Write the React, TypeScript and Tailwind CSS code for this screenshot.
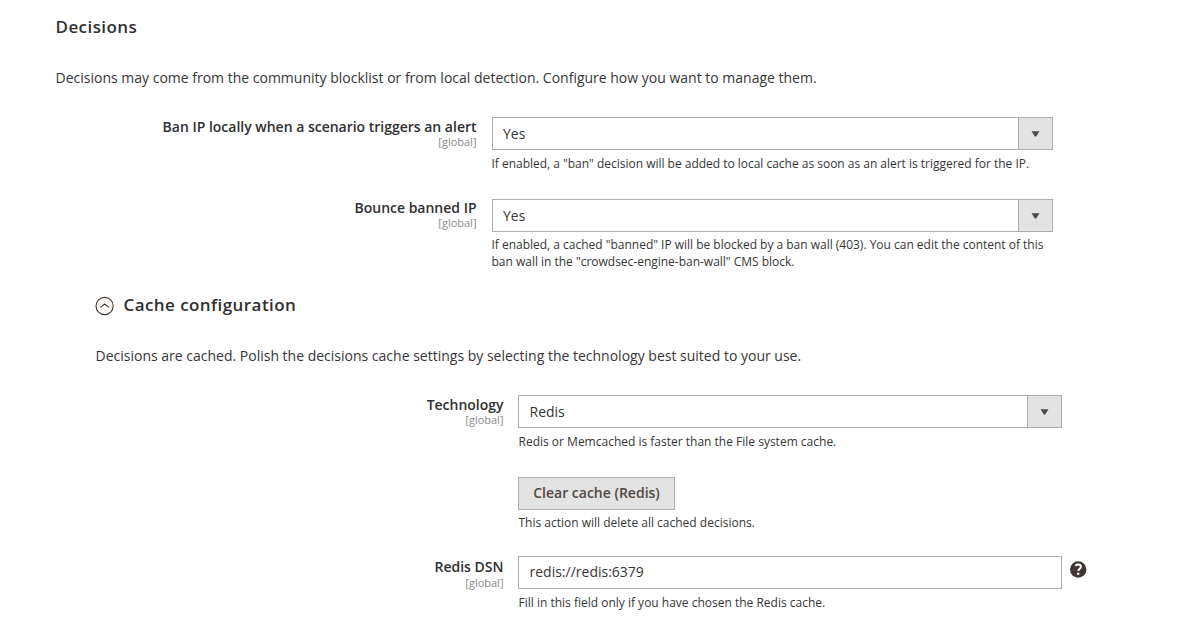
import React from "react";

function Label({ text, className = "" }: { text: string; className?: string }) {
  return (
    <div className={`pr-[0.5px] text-right ${className}`}>
      <div className="text-[14px] font-semibold leading-[18px] tracking-[-0.01px] text-[#303030]">{text}</div>
      <div className="text-[11px] leading-[12px] text-[#8c8c8c]">[global]</div>
    </div>
  );
}

function Select({ value, className = "pl-[10px]" }: { value: string; className?: string }) {
  return (
    <div className="flex h-[33px] border border-[#adadad] bg-white text-[14px] text-[#363636]">
      <div className={`flex flex-1 items-center ${className}`}>{value}</div>
      <div className="flex w-[34px] items-center justify-center border-l border-[#adadad] bg-[#e3e3e3]">
        <svg className="mt-px" width="9" height="6" viewBox="0 0 9 6"><path d="M0.5 0.3h8L5.2 5.5H3.8z" fill="#514943" /></svg>
      </div>
    </div>
  );
}

function HelpIcon() {
  return (
    <svg className="-ml-[6px] mt-[5px]" width="17" height="17" viewBox="0 0 17 17" fill="none">
      <circle cx="8.2" cy="8.5" r="8.2" fill="#41362f" />
      <path d="M5.4 4.7C6.2 3.9 7.2 3.6 8.2 3.6c1.7 0 2.7.8 2.7 2.1 0 2-2.6 2-2.6 4.4" stroke="#fff" strokeWidth="2" />
      <circle cx="8.2" cy="12.8" r="1.3" fill="#fff" />
    </svg>
  );
}

export default function App() {
  return (
    <main className="h-[634px] w-[1200px] overflow-hidden bg-white font-['Open_Sans',sans-serif] text-[#363636]">
      <h2 className="ml-[55.5px] pt-[14px] text-[17px] font-semibold leading-[26px] tracking-[0.425px] text-[#303030]">Decisions</h2>
      <p className="ml-[55.5px] mt-[28px] text-[14px] leading-[20px]">Decisions may come from the community blocklist or from local detection. Configure how you want to manage them.</p>
      <div className="mt-[29px] grid h-[82px] grid-cols-[477px_561px] gap-x-[15px]">
        <Label className="pt-px" text="Ban IP locally when a scenario triggers an alert" />
        <div>
          <Select value="Yes" />
          <p className="-ml-[0.5px] mt-[5px] text-[12px] leading-[17px] tracking-[-0.015px]">If enabled, a "ban" decision will be added to local cache as soon as an alert is triggered for the IP.</p>
        </div>
      </div>
      <div className="grid h-[93px] grid-cols-[477px_561px] gap-x-[15px]">
        <Label text="Bounce banned IP" />
        <div>
          <Select value="Yes" />
          <p className="-ml-[0.5px] mt-[4px] text-[12px] leading-[17px] tracking-[-0.012px]">If enabled, a cached "banned" IP will be blocked by a ban wall (403). You can edit the content of this ban wall in the "crowdsec-engine-ban-wall" CMS block.</p>
        </div>
      </div>
      <div className="ml-[94.5px] flex h-[26px] items-center">
        <svg className="mt-[2px]" width="20" height="20" viewBox="0 0 20 20" fill="none" stroke="#41362f" strokeWidth="1.1"><circle cx="9.6" cy="10" r="8.6" /><path d="M5.3 11.4L9.6 8l4.3 3.4" strokeWidth="1.2" /></svg>
        <h2 className="ml-[9px] text-[17px] font-semibold tracking-[0.425px] text-[#303030]">Cache configuration</h2>
      </div>
      <p className="ml-[95.5px] mt-[28px] text-[14px] leading-[20px]">Decisions are cached. Polish the decisions cache settings by selecting the technology best suited to your use.</p>
      <div className="mt-[29px] grid h-[82px] grid-cols-[504px_544px] gap-x-[14px]">
        <Label className="pt-px" text="Technology" />
        <div>
          <Select value="Redis" className="pl-[10.5px]" />
          <p className="ml-[0.5px] mt-[5px] text-[12px] leading-[17px]">Redis or Memcached is faster than the File system cache.</p>
        </div>
      </div>
      <div className="ml-[518px] h-[79px]">
        <button className="block h-[33px] w-[157px] border border-[#adadad] bg-[#e3e3e3] pb-[2px] text-[14px] font-semibold text-[#514943]">Clear cache (Redis)</button>
        <p className="ml-[0.5px] mt-[4px] text-[12px] leading-[17px]">This action will delete all cached decisions.</p>
      </div>
      <div className="grid grid-cols-[504px_544px_17px] gap-x-[14px]">
        <div className="pr-[0.5px] pt-[2px] text-right">
          <div className="text-[14px] font-semibold leading-[18px] text-[#303030]">Redis DSN</div>
          <div className="mt-px text-[11px] leading-[12px] text-[#8c8c8c]">[global]</div>
        </div>
        <div>
          <input className="block h-[33px] w-full border border-[#adadad] pb-[2px] pl-[10.5px] text-[14px]" defaultValue="redis://redis:6379" />
          <p className="ml-[0.5px] mt-[5px] text-[12px] leading-[17px]">Fill in this field only if you have chosen the Redis cache.</p>
        </div>
        <HelpIcon />
      </div>
    </main>
  );
}
